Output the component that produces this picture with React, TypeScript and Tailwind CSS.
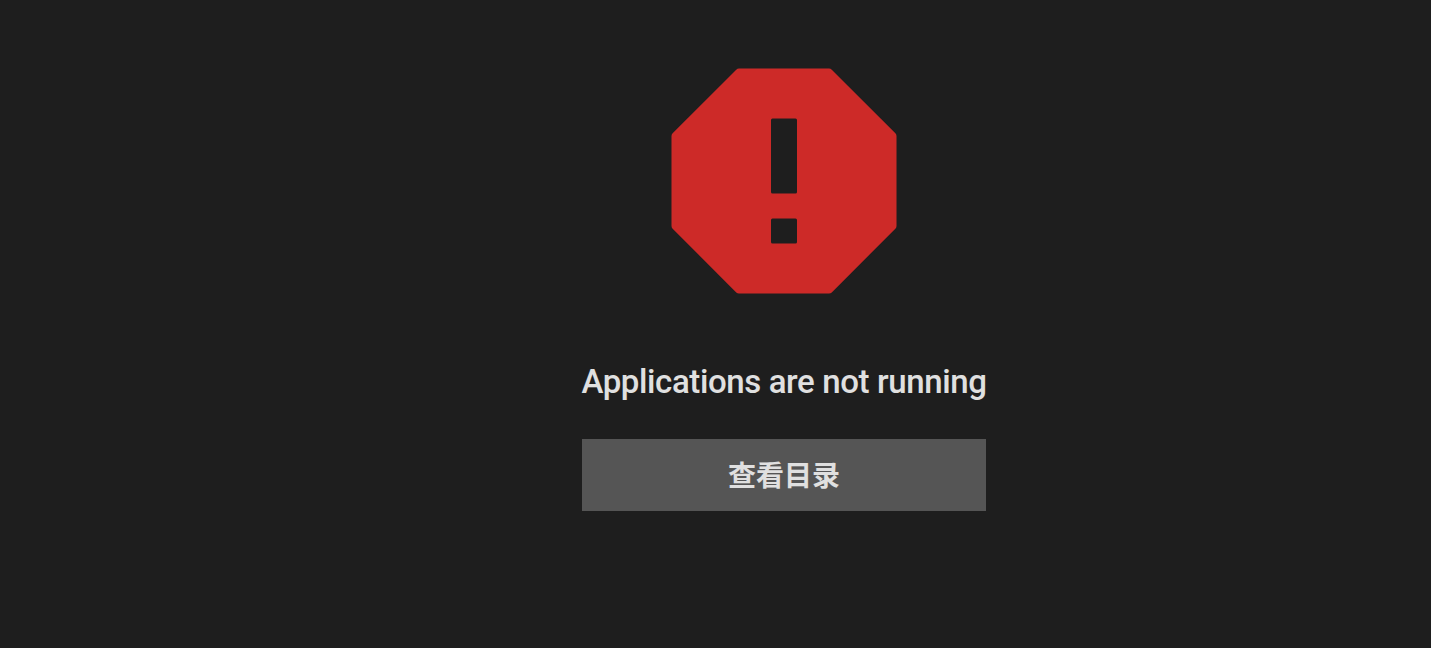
export default function App() {
  return (
    <div className="flex min-h-[648px] justify-center overflow-hidden bg-[#1e1e1e] pl-[137px] font-['Roboto','Noto_Sans_CJK_SC',sans-serif]">
      <div className="flex w-[404px] flex-col items-center pt-[30.5px]">
        <svg viewBox="0 0 24 24" className="h-[300px] w-[300px] shrink-0" aria-hidden="true">
          <path
            fill="#cd2a28"
            fillRule="evenodd"
            d="M8.4 3H15.6Q15.73 3 15.82 3.09L20.91 8.18Q21 8.27 21 8.4V15.6Q21 15.73 20.91 15.82L15.82 20.91Q15.73 21 15.6 21H8.4Q8.27 21 8.18 20.91L3.09 15.82Q3 15.73 3 15.6V8.4Q3 8.27 3.09 8.18L8.18 3.09Q8.27 3 8.4 3Z
               M11.08 7H12.92Q13.04 7 13.04 7.12V12.88Q13.04 13 12.92 13H11.08Q10.96 13 10.96 12.88V7.12Q10.96 7 11.08 7Z
               M11.08 15H12.92Q13.04 15 13.04 15.12V16.88Q13.04 17 12.92 17H11.08Q10.96 17 10.96 16.88V15.12Q10.96 15 11.08 15Z"
          />
        </svg>
        <h1 className="mt-[26px] whitespace-nowrap text-[33px] leading-[50px] font-medium tracking-[-0.38px] text-[#e0e0e0]">
          Applications are not running
        </h1>
        <button className="mt-[32.5px] h-[72px] w-full bg-[#555555] pt-[3px] text-[28px] font-bold text-[#e0e0e0]">
          查看目录
        </button>
      </div>
    </div>
  );
}
